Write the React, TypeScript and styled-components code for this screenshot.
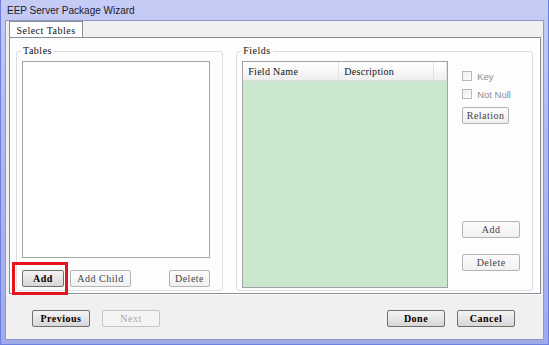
import styled, { createGlobalStyle } from 'styled-components';

const GlobalStyle = createGlobalStyle`
  html, body {
    margin: 0;
    padding: 0;
    background: #ffffff;
  }
`;

const LABEL = `"Liberation Serif", "DejaVu Serif", serif`;
const SANS = `"Liberation Sans", Arial, sans-serif`;

const Window = styled.div`
  width: 549px;
  height: 345px;
  box-sizing: border-box;
  display: flex;
  flex-direction: column;
  padding: 0 4px 4px 4px;
  background: linear-gradient(180deg, #c5ccf5 0%, #afb9f0 40%, #a0abeb 100%);
  border-left: 1px solid #6d80dd;
  border-right: 1px solid #6d80dd;
  border-bottom: 1px solid #6d80dd;
`;

const TitleBar = styled.div`
  height: 20px;
  display: flex;
  align-items: center;
  padding-left: 2px;
  font-family: ${SANS};
  font-size: 10px;
  color: #1b1b2a;
`;

const Client = styled.div`
  flex: 1;
  display: flex;
  flex-direction: column;
  background: #f0f0f0;
  border: 1px solid #8e98c6;
`;

const TabStrip = styled.div`
  display: flex;
  padding-left: 3px;
  height: 16px;
  position: relative;
  z-index: 1;
`;

const Tab = styled.div`
  width: 74px;
  height: 16px;
  box-sizing: border-box;
  border: 1px solid #8a8d96;
  border-bottom: none;
  background: #ffffff;
  font-family: ${LABEL};
  font-size: 10px;
  letter-spacing: 0.5px;
  color: #111;
  display: flex;
  align-items: center;
  justify-content: center;
  margin-bottom: -1px;
  padding-top: 1px;
`;

const TabPanel = styled.div`
  margin: 0 2px 0 3px;
  height: 257px;
  box-sizing: border-box;
  border: 1px solid #8a8d96;
  background: #fdfdfd;
  display: flex;
  gap: 13px;
  padding: 8px 7px 2px 6px;
`;

const Group = styled.fieldset<{ $width: number }>`
  width: ${p => p.$width}px;
  box-sizing: border-box;
  margin: 0;
  padding: 5px 5px 0 5px;
  border: 1px solid #d9dfe3;
  border-radius: 3px;
  min-width: 0;
  position: relative;
`;

const Legend = styled.legend`
  margin-left: -1px;
  padding: 0 2px;
  font-family: ${LABEL};
  font-size: 10px;
  line-height: 10px;
  letter-spacing: 0.5px;
  color: #111;
`;

const ListBox = styled.div`
  width: 188px;
  height: 197px;
  box-sizing: border-box;
  border: 1px solid #a5a5a5;
  background: #ffffff;
`;

const ButtonRow = styled.div`
  width: 188px;
  display: flex;
  gap: 6px;
  margin-top: 12px;
  position: relative;
`;

const Button = styled.button<{ $w: number; $tone?: 'strong' | 'light' | 'disabled' }>`
  width: ${p => p.$w}px;
  height: 17px;
  box-sizing: border-box;
  padding: 0;
  border-radius: 2px;
  font-family: ${LABEL};
  font-size: 10px;
  letter-spacing: 0.5px;
  display: flex;
  align-items: center;
  justify-content: center;
  border: 1px solid
    ${p => (p.$tone === 'strong' ? '#707070' : p.$tone === 'disabled' ? '#c4c4c4' : '#b4b4b4')};
  background: ${p =>
    p.$tone === 'strong'
      ? 'linear-gradient(180deg, #f4f4f4 0%, #e6e6e6 50%, #d6d6d6 100%)'
      : p.$tone === 'disabled'
        ? '#f4f4f4'
        : 'linear-gradient(180deg, #fbfbfb 0%, #f1f1f1 100%)'};
  color: ${p => (p.$tone === 'strong' ? '#000' : p.$tone === 'disabled' ? '#a8a8a8' : '#444')};
  font-weight: ${p => (p.$tone === 'strong' ? 'bold' : 'normal')};
`;

const Spacer = styled.div`
  flex: 1;
`;

const Highlight = styled.div`
  position: absolute;
  left: -10px;
  top: -8px;
  width: 56px;
  height: 33px;
  box-sizing: border-box;
  border: 3px solid #e3141c;
  pointer-events: none;
`;

const FieldsBody = styled.div`
  display: flex;
  gap: 14px;
`;

const Grid = styled.div`
  width: 206px;
  height: 227px;
  box-sizing: border-box;
  border: 1px solid #a0a4aa;
  background: #cbe7cd;
  display: flex;
  flex-direction: column;
`;

const GridHeader = styled.div`
  height: 18px;
  display: flex;
  background: linear-gradient(180deg, #ffffff 0%, #f6f6f6 60%, #efefef 100%);
  border-bottom: 1px solid #dcdcdc;
`;

const HeaderCell = styled.div<{ $w?: number }>`
  width: ${p => (p.$w ? `${p.$w}px` : 'auto')};
  flex: ${p => (p.$w ? 'none' : '1')};
  box-sizing: border-box;
  padding-left: 5px;
  border-right: 1px solid #e2e2e2;
  display: flex;
  align-items: center;
  font-family: ${LABEL};
  font-size: 10px;
  letter-spacing: 0.3px;
  color: #111;
`;

const SideColumn = styled.div`
  display: flex;
  flex-direction: column;
  padding-top: 10px;
  width: 60px;
`;

const CheckRow = styled.label`
  display: flex;
  align-items: center;
  gap: 5px;
  height: 10px;
  margin-bottom: 8px;
  font-family: ${SANS};
  font-size: 9.5px;
  color: #8e8e8e;
`;

const CheckBox = styled.span`
  width: 10px;
  height: 10px;
  box-sizing: border-box;
  border: 1px solid #b8b8b8;
  background: linear-gradient(135deg, #f0f0f0, #fbfbfb);
`;

const SideButtons = styled.div`
  display: flex;
  flex-direction: column;
  gap: 16px;
  margin-top: 97px;
`;

const Footer = styled.div`
  flex: 1;
  display: flex;
  align-items: center;
  padding: 2px 28px 0 26px;
  border-top: 1px solid #ffffff;
`;

const FooterGroup = styled.div`
  display: flex;
  gap: 12px;
`;

export default function App() {
  return (
    <>
      <GlobalStyle />
      <Window>
        <TitleBar>EEP Server Package Wizard</TitleBar>
        <Client>
          <TabStrip>
            <Tab>Select Tables</Tab>
          </TabStrip>
          <TabPanel>
            <Group $width={208}>
              <Legend>Tables</Legend>
              <ListBox />
              <ButtonRow>
                <Button $w={42} $tone="strong">Add</Button>
                <Button $w={61}>Add Child</Button>
                <Spacer />
                <Button $w={41}>Delete</Button>
                <Highlight />
              </ButtonRow>
            </Group>
            <Group $width={298}>
              <Legend>Fields</Legend>
              <FieldsBody>
                <Grid>
                  <GridHeader>
                    <HeaderCell $w={96}>Field Name</HeaderCell>
                    <HeaderCell $w={95}>Description</HeaderCell>
                    <HeaderCell />
                  </GridHeader>
                </Grid>
                <SideColumn>
                  <CheckRow>
                    <CheckBox />
                    Key
                  </CheckRow>
                  <CheckRow>
                    <CheckBox />
                    Not Null
                  </CheckRow>
                  <Button $w={47}>Relation</Button>
                  <SideButtons>
                    <Button $w={58}>Add</Button>
                    <Button $w={58}>Delete</Button>
                  </SideButtons>
                </SideColumn>
              </FieldsBody>
            </Group>
          </TabPanel>
          <Footer>
            <FooterGroup>
              <Button $w={58} $tone="strong">Previous</Button>
              <Button $w={58} $tone="disabled">Next</Button>
            </FooterGroup>
            <Spacer />
            <FooterGroup>
              <Button $w={58} $tone="strong">Done</Button>
              <Button $w={58} $tone="strong">Cancel</Button>
            </FooterGroup>
          </Footer>
        </Client>
      </Window>
    </>
  );
}
